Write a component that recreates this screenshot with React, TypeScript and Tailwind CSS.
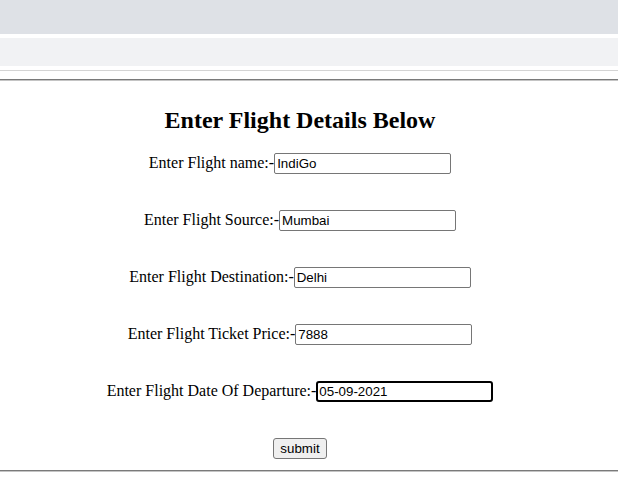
import React from 'react';

const fields = [
  { label: 'Enter Flight name:-', value: 'IndiGo' },
  { label: 'Enter Flight Source:-', value: 'Mumbai' },
  { label: 'Enter Flight Destination:-', value: 'Delhi' },
  { label: 'Enter Flight Ticket Price:-', value: '7888' },
  { label: 'Enter Flight Date Of Departure:-', value: '05-09-2021', focused: true },
];

const App = () => {
  return (
    <div className="min-h-screen bg-white font-['Liberation_Serif',serif] text-black">
      {/* Browser-ish bars */}
      <div className="h-[34px] bg-[#dee1e6]" />
      <div className="h-[4px]" />
      <div className="h-[28px] bg-[#f1f2f4]" />
      <div className="h-[4px]" />
      <div className="h-px bg-[#d4d4d4]" />
      <div className="h-[8px]" />
      <div className="border-t border-[#7a7a7a] border-b border-b-[#c4c4c4]" />

      {/* Form */}
      <div className="w-[600px] flex flex-col items-center">
        <h2 className="mt-[25px] text-[24px] leading-[28px] font-bold">Enter Flight Details Below</h2>

        <div className="mt-[17px] flex flex-col gap-[36px]">
          {fields.map((f) => (
            <div key={f.label} className="flex items-baseline justify-center h-[21px]">
              <label className="text-[16px]">{f.label}</label>
              <input
                type="text"
                defaultValue={f.value}
                className={
                  f.focused
                    ? "w-[177px] h-[21px] border-2 border-black rounded-[3px] px-[1px] py-0 text-[13.33px] font-['Liberation_Sans',sans-serif] outline-none"
                    : "w-[177px] h-[21px] border border-[#767676] rounded-[2px] px-[2px] py-[1px] text-[13.33px] font-['Liberation_Sans',sans-serif] outline-none"
                }
              />
            </div>
          ))}
        </div>

        <button className="mt-[38px] h-[21px] px-[6px] border border-[#767676] rounded-[3px] bg-[#efefef] text-[13.33px] leading-none font-['Liberation_Sans',sans-serif]">
          submit
        </button>
      </div>

      <div className="mt-[11px] border-t border-[#7a7a7a] border-b border-b-[#c4c4c4]" />
    </div>
  );
};

export default App;
